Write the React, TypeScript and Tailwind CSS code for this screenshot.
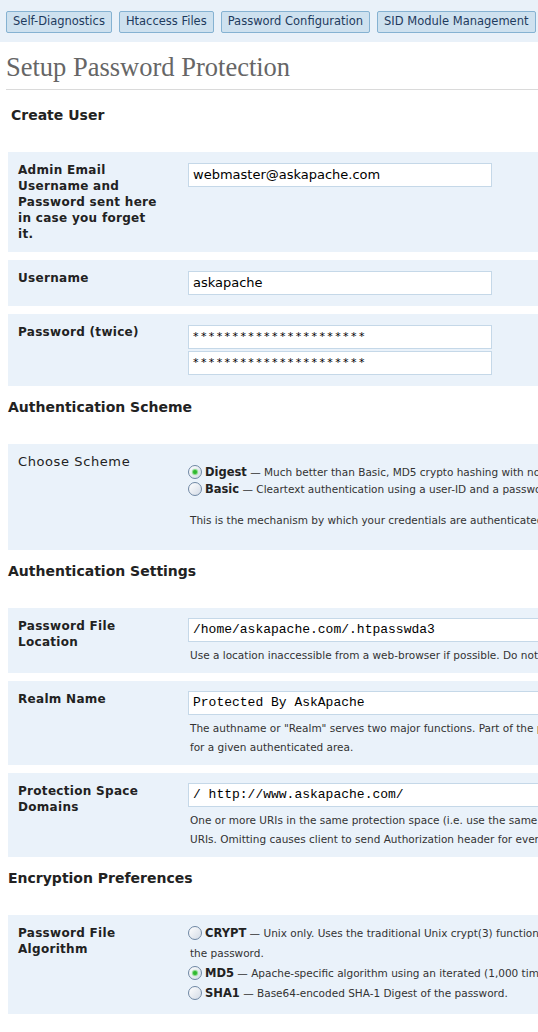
import type { ReactNode } from 'react'

const NAV = ['Self-Diagnostics', 'Htaccess Files', 'Password Configuration', 'SID Module Management']

function Radio({ checked }: { checked?: boolean }) {
  return (
    <span className="relative inline-block align-[-3px] mr-[3px] h-[14px] w-[14px] rounded-full border border-[#6f87a3] bg-gradient-to-br from-white to-[#d3dbe6]">
      {checked && (
        <span className="absolute left-[4px] top-[4px] h-[4px] w-[4px] rounded-full bg-[#2fb82f] shadow-[0_0_1px_1px_#7bd87b]" />
      )}
    </span>
  )
}

function Heading({ children, first }: { children: ReactNode; first?: boolean }) {
  return (
    <h3 className={`${first ? 'pl-[11px] pt-[17px]' : 'pl-[8px] pt-[5px]'} pb-[29px] text-[14px] leading-[16px] font-bold text-[#222]`}>
      {children}
    </h3>
  )
}

function Row({ label, bold = true, children, className = '' }: { label: ReactNode; bold?: boolean; children: ReactNode; className?: string }) {
  return (
    <div className="flex bg-[#eaf2fa] ml-[8px] mb-[8px]">
      <div
        className={`w-[180px] shrink-0 pl-[10px] pr-[26px] py-[10px] text-[#222] ${
          bold ? 'text-[12px] font-bold leading-[16px] tracking-[0.3px]' : 'text-[13px] leading-[16px] tracking-[0.6px]'
        }`}
      >
        {label}
      </div>
      <div className={`flex-1 ${className}`}>{children}</div>
    </div>
  )
}

function Field({ value, mono, wide, stars }: { value: string; mono?: boolean; wide?: boolean; stars?: boolean }) {
  return (
    <div
      className={`h-[24px] ${wide ? 'w-[420px]' : 'w-[304px]'} bg-white border border-[#c5d8e8] px-[4px] flex items-center whitespace-nowrap text-black ${
        mono ? "font-['Liberation_Mono',monospace] text-[13px]" : stars ? 'text-[11px] tracking-[2.4px]' : 'text-[13px]'
      }`}
    >
      {value}
    </div>
  )
}

function Help({ children }: { children: ReactNode }) {
  return <p className="mt-[4px] pl-[2px] text-[10.5px] leading-[19px] text-[#333] whitespace-nowrap">{children}</p>
}

export default function App() {
  return (
    <div className="w-[538px] h-[1032px] overflow-hidden bg-white font-['DejaVu_Sans',sans-serif]">
      <div className="w-[760px]">
        <div className="h-[42px] w-[538px] bg-[#e9f1f9] flex items-start gap-[7px] pl-[6px] pt-[11px]">
          {NAV.map((n) => (
            <div
              key={n}
              className="h-[22px] px-[6px] flex items-center rounded-[2px] border border-[#85b2d2] bg-[#cee1ef] text-[11.5px] text-[#1e3b5e] whitespace-nowrap"
            >
              {n}
            </div>
          ))}
        </div>

        <h2 className="mx-[6px] w-[532px] pt-[11px] pb-[8px] border-b border-[#dadada] font-['Liberation_Serif',serif] text-[26.5px] leading-[28px] text-[#666]">
          Setup Password Protection
        </h2>

        <Heading first>Create User</Heading>
        <Row label="Admin Email Username and Password sent here in case you forget it." className="pt-[11px]">
          <Field value="webmaster@askapache.com" />
        </Row>
        <Row label="Username" className="py-[11px]">
          <Field value="askapache" />
        </Row>
        <Row label="Password (twice)" className="py-[11px] flex flex-col gap-[2px]">
          <Field value="**********************" stars />
          <Field value="**********************" stars />
        </Row>

        <Heading>Authentication Scheme</Heading>
        <Row label="Choose Scheme" bold={false} className="pt-[20px] pb-[21px] text-[10.5px] leading-[17px] text-[#333] whitespace-nowrap">
          <div><Radio checked /><b className="text-[11.5px] text-[#222]">Digest</b> — Much better than Basic, MD5 crypto hashing with nonce's to prevent cryptanalysis.</div>
          <div><Radio /><b className="text-[11.5px] text-[#222]">Basic</b> — Cleartext authentication using a user-ID and a password for each realm.</div>
          <p className="mt-[14px] pl-[2px]">This is the mechanism by which your credentials are authenticated (Digest is strongly preferred)</p>
        </Row>

        <Heading>Authentication Settings</Heading>
        <Row label="Password File Location" className="pt-[10px] pb-[8px]">
          <Field value="/home/askapache.com/.htpasswda3" mono wide />
          <Help>Use a location inaccessible from a web-browser if possible. Do not put it in the directory that it protects.</Help>
        </Row>
        <Row label="Realm Name" className="pt-[10px] pb-[8px]">
          <Field value="Protected By AskApache" mono wide />
          <Help>
            The authname or "Realm" serves two major functions. Part of the password dialog box.
            <br />
            for a given authenticated area.
          </Help>
        </Row>
        <Row label="Protection Space Domains" className="pt-[10px] pb-[8px]">
          <Field value="/ http://www.askapache.com/" mono wide />
          <Help>
            One or more URIs in the same protection space (i.e. use the same realm and username/password info).
            <br />
            URIs. Omitting causes client to send Authorization header for every request.
          </Help>
        </Row>

        <Heading>Encryption Preferences</Heading>
        <Row label="Password File Algorithm" className="pt-[8px] pb-[11px] text-[10.5px] leading-[20px] text-[#333] whitespace-nowrap">
          <div><Radio /><b className="text-[11.5px] text-[#222]">CRYPT</b> — Unix only. Uses the traditional Unix crypt(3) function with a randomly-generated salt</div>
          <div className="pl-[2px]">the password.</div>
          <div><Radio checked /><b className="text-[11.5px] text-[#222]">MD5</b> — Apache-specific algorithm using an iterated (1,000 times) MD5 digest.</div>
          <div><Radio /><b className="text-[11.5px] text-[#222]">SHA1</b> — Base64-encoded SHA-1 Digest of the password.</div>
        </Row>
      </div>
    </div>
  )
}
